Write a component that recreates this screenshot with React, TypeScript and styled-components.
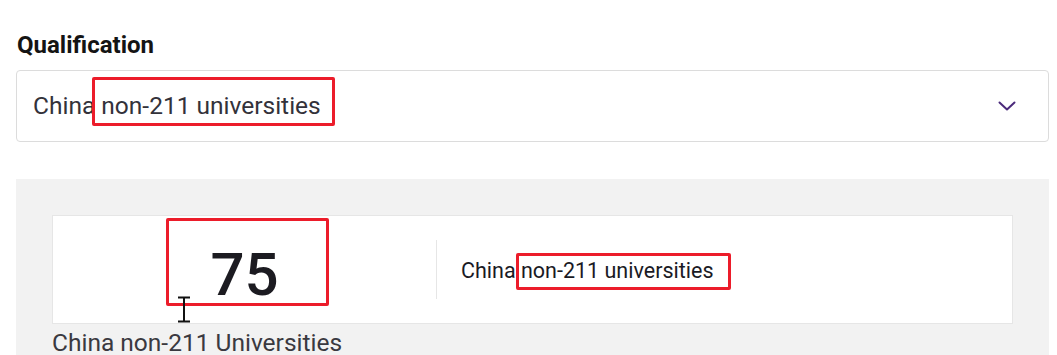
import styled, { createGlobalStyle } from 'styled-components';

const GlobalStyle = createGlobalStyle`
  body {
    margin: 0;
    background: #ffffff;
    font-family: Roboto, "Noto Sans", sans-serif;
    overflow: hidden;
  }
`;

const Page = styled.div`
  width: 1057px;
  height: 355px;
  padding: 31px 8px 0 16px;
  box-sizing: border-box;
  position: relative;
  overflow: hidden;
`;

const Label = styled.div`
  font-size: 24px;
  font-weight: 700;
  color: #141414;
  line-height: 28px;
  margin-left: 1px;
`;

const Select = styled.div`
  margin-top: 11px;
  height: 72px;
  border: 1px solid #dcdcdc;
  border-radius: 4px;
  box-sizing: border-box;
  display: flex;
  align-items: center;
  justify-content: space-between;
  padding: 0 32px 0 16px;
`;

const SelectValue = styled.span`
  font-size: 24.5px;
  color: #33323a;
  margin-top: -2px;
`;

const Panel = styled.div`
  margin-top: 37px;
  background: #f2f2f2;
  padding: 36px 36px 0 36px;
  height: 200px;
`;

const Card = styled.div`
  height: 109px;
  background: #ffffff;
  border: 1px solid #e6e6e6;
  box-sizing: border-box;
  display: flex;
  align-items: center;
`;

const ScoreCell = styled.div`
  width: 383px;
  display: flex;
  justify-content: center;
  font-size: 60px;
  font-weight: 500;
  color: #1c1b21;
  padding-top: 10px;
`;

const Divider = styled.div`
  width: 1px;
  height: 59px;
  background: #e6e6e6;
`;

const CardText = styled.div`
  padding-left: 24px;
  font-size: 21.5px;
  color: #1a1a24;
  margin-top: 2px;
`;

const Caption = styled.div`
  margin-top: 4px;
  font-size: 24.5px;
  color: #3a3940;
`;

const Marker = styled.div<{ $x: number; $y: number; $w: number; $h: number }>`
  position: absolute;
  left: ${p => p.$x}px;
  top: ${p => p.$y}px;
  width: ${p => p.$w}px;
  height: ${p => p.$h}px;
  border: 3px solid #ec1c2a;
  border-radius: 2px;
  box-sizing: border-box;
`;

const Cursor = styled.svg`
  position: absolute;
  left: 176px;
  top: 296px;
`;

const Chevron = () => (
  <svg width="18" height="10" viewBox="0 0 18 10" fill="none">
    <path d="M1.5 1.5 L9 8.5 L16.5 1.5" stroke="#4b2a7b" strokeWidth="2" strokeLinecap="round" strokeLinejoin="round" />
  </svg>
);

const App = () => (
  <>
    <GlobalStyle />
    <Page>
      <Label>Qualification</Label>
      <Select>
        <SelectValue>China non-211 universities</SelectValue>
        <Chevron />
      </Select>
      <Panel>
        <Card>
          <ScoreCell>75</ScoreCell>
          <Divider />
          <CardText>China non-211 universities</CardText>
        </Card>
        <Caption>China non-211 Universities</Caption>
      </Panel>
      <Marker $x={92} $y={77} $w={243} $h={49} />
      <Marker $x={166} $y={218} $w={163} $h={88} />
      <Marker $x={516} $y={253} $w={215} $h={37} />
      <Cursor width="16" height="27" viewBox="0 0 16 27">
        <path d="M2 1.5 H14 M8 1.5 V25.5 M2 25.5 H14" stroke="#111" strokeWidth="2" />
      </Cursor>
    </Page>
  </>
);

export default App;
